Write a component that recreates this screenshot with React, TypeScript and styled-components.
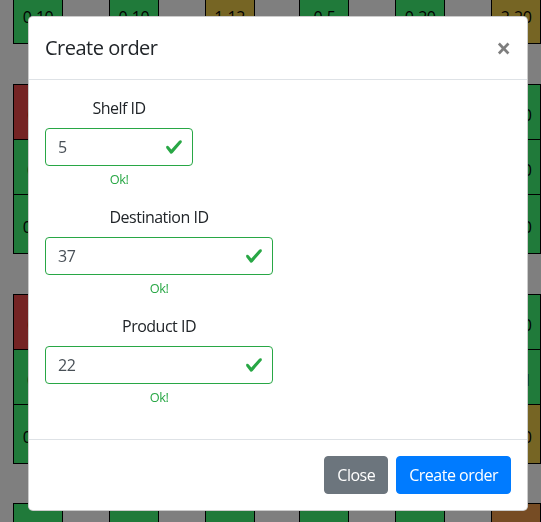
import React from "react";
import styled, { createGlobalStyle } from "styled-components";

const FONT = `"Open Sans", "Noto Sans", "DejaVu Sans", sans-serif`;

const GlobalStyle = createGlobalStyle`
  *, *::before, *::after { box-sizing: border-box; }
  html, body { margin: 0; padding: 0; background: #fff; }
  body {
    width: 541px;
    height: 522px;
    overflow: hidden;
    font-family: ${FONT};
    letter-spacing: -0.5px;
  }
`;

type Tone = "green" | "red" | "olive" | "brown" | "white";

const tones: Record<Tone, string> = {
  green: "#40f474",
  red: "#e84848",
  olive: "#ecca48",
  brown: "#ec9848",
  white: "#ffffff",
};

const Warehouse = styled.table`
  border-collapse: collapse;
  table-layout: fixed;
  margin: -17px 0 0 13px;
  font-family: ${FONT};
  font-size: 16px;
  line-height: 1.5;
  color: #000;
`;

const Row = styled.tr<{ $h: number }>`
  height: ${(p) => p.$h}px;
`;

const Cell = styled.td<{ $tone?: Tone }>`
  padding: 6px 0 0;
  text-align: center;
  vertical-align: middle;
  white-space: nowrap;
  overflow: hidden;
  border: ${(p) => (p.$tone ? "1px solid #000" : "none")};
  background: ${(p) => (p.$tone ? tones[p.$tone] : "transparent")};
`;

const Backdrop = styled.div`
  position: fixed;
  inset: 0;
  background: #000;
  opacity: 0.5;
`;

const ModalLayer = styled.div`
  position: fixed;
  inset: 0;
  overflow: hidden;
  display: flex;
  align-items: flex-start;
  padding: 16px 0 0 28px;
`;

const Dialog = styled.div`
  width: 500px;
  display: flex;
  flex-direction: column;
  background: #fff;
  border: 1px solid rgba(0, 0, 0, 0.2);
  border-radius: 4.8px;
  color: #212529;
  font-family: ${FONT};
  font-size: 16px;
  line-height: 1.5;
`;

const Header = styled.div`
  display: flex;
  align-items: flex-start;
  justify-content: space-between;
  padding: 16px;
  border-bottom: 1px solid #dee2e6;
`;

const Title = styled.h5`
  margin: 0;
  font-size: 20px;
  font-weight: 500;
  line-height: 1.5;
`;

const CloseX = styled.button`
  padding: 18px 16px 14px;
  margin: -16px -16px -16px auto;
  background: transparent;
  border: 0;
  font-family: ${FONT};
  font-size: 26px;
  font-weight: 700;
  line-height: 1;
  color: #000;
  opacity: 0.5;
  text-shadow: 0 1px 0 #fff;
  cursor: pointer;
`;

const Body = styled.div`
  padding: 16px;
`;

const FormGroup = styled.div<{ $w: number }>`
  width: ${(p) => p.$w}px;
  margin-bottom: 16px;
  text-align: center;
`;

const Label = styled.label`
  display: inline-block;
  margin-bottom: 8px;
`;

const InputWrap = styled.div`
  position: relative;
`;

const Input = styled.input`
  display: block;
  width: 100%;
  height: 38px;
  padding: 6px 36px 6px 12px;
  font-family: ${FONT};
  font-size: 16px;
  letter-spacing: -0.5px;
  line-height: 1.5;
  color: #495057;
  background: #fff;
  border: 1px solid #28a745;
  border-radius: 4px;
  outline: none;
`;

const Check = styled.svg`
  position: absolute;
  right: 10px;
  top: 50%;
  width: 18px;
  height: 18px;
  transform: translateY(-50%);
  pointer-events: none;
`;

const Feedback = styled.div`
  margin-top: 4px;
  font-size: 12.8px;
  line-height: 19px;
  color: #28a745;
`;

const Footer = styled.div`
  display: flex;
  justify-content: flex-end;
  align-items: center;
  padding: 12px;
  border-top: 1px solid #dee2e6;
`;

const Button = styled.button<{ $variant: "secondary" | "primary" }>`
  margin: 4px;
  padding: 6px 12px;
  font-family: ${FONT};
  font-size: 16px;
  letter-spacing: -0.5px;
  line-height: 1.5;
  color: #fff;
  background: ${(p) => (p.$variant === "primary" ? "#007bff" : "#6c757d")};
  border: 1px solid ${(p) => (p.$variant === "primary" ? "#007bff" : "#6c757d")};
  border-radius: 4px;
  cursor: pointer;
`;

type CellDef = { tone?: Tone; text?: string };

const colWidths = [49, 47, 49, 47, 49, 46, 49, 47, 49, 47, 49];

const empty = (): CellDef => ({});

// Shelf row: coloured shelves in even columns; only the edge columns
// show a label, the middle ones lie hidden beneath the dialog.
const shelfRow = (first: CellDef, last: CellDef, middle?: CellDef[]): CellDef[] =>
  Array.from({ length: 11 }, (_, i) => {
    if (i === 0) return first;
    if (i === 10) return last;
    if (i % 2 === 1) return empty();
    return middle ? middle[i / 2 - 1] : { tone: "green" as Tone };
  });

const aisle = (): CellDef[] => Array.from({ length: 11 }, empty);

const rows: { h: number; cells: CellDef[] }[] = [
  {
    h: 60,
    cells: shelfRow({ tone: "green", text: "0-10" }, { tone: "olive", text: "2-20" }, [
      { tone: "green", text: "0-10" },
      { tone: "olive", text: "1-12" },
      { tone: "green", text: "0-5" },
      { tone: "green", text: "0-20" },
    ]),
  },
  { h: 41, cells: aisle() },
  { h: 55, cells: shelfRow({ tone: "red", text: "0-5" }, { tone: "green", text: "0-10" }) },
  { h: 55, cells: shelfRow({ tone: "green", text: "0-5" }, { tone: "green", text: "0-10" }) },
  { h: 59, cells: shelfRow({ tone: "green", text: "0-10" }, { tone: "green", text: "0-10" }) },
  { h: 41, cells: aisle() },
  { h: 55, cells: shelfRow({ tone: "red", text: "0-5" }, { tone: "green", text: "0-10" }) },
  { h: 55, cells: shelfRow({ tone: "green", text: "0-5" }, { tone: "green", text: "0-11" }) },
  { h: 59, cells: shelfRow({ tone: "green", text: "0-10" }, { tone: "olive", text: "0-10" }) },
  { h: 40, cells: aisle() },
  {
    h: 55,
    cells: Array.from({ length: 11 }, (_, i) =>
      i === 10 ? { tone: "brown" as Tone } : i % 2 === 0 ? { tone: "green" as Tone } : { tone: "white" as Tone }
    ),
  },
];

const CheckIcon = () => (
  <Check viewBox="0 0 8 8" aria-hidden="true">
    <path
      fill="#28a745"
      d="M2.3 6.73L.6 4.53c-.4-1.04.46-1.4 1.1-.8l1.1 1.4 3.4-3.8c.6-.63 1.6-.27 1.2.7l-4 4.6c-.43.5-.8.4-1.1.1z"
    />
  </Check>
);

const fields = [
  { id: "shelf", label: "Shelf ID", value: "5", width: 148 },
  { id: "dest", label: "Destination ID", value: "37", width: 228 },
  { id: "product", label: "Product ID", value: "22", width: 228 },
];

export default function App() {
  return (
    <>
      <GlobalStyle />
      <Warehouse>
        <colgroup>
          {colWidths.map((w, i) => (
            <col key={i} style={{ width: w }} />
          ))}
        </colgroup>
        <tbody>
          {rows.map((r, ri) => (
            <Row key={ri} $h={r.h}>
              {r.cells.map((c, ci) => (
                <Cell key={ci} $tone={c.tone}>
                  {c.text}
                </Cell>
              ))}
            </Row>
          ))}
        </tbody>
      </Warehouse>
      <Backdrop />
      <ModalLayer>
        <Dialog role="dialog">
          <Header>
            <Title>Create order</Title>
            <CloseX type="button" aria-label="Close">
              ×
            </CloseX>
          </Header>
          <Body>
            {fields.map((f) => (
              <FormGroup key={f.id} $w={f.width}>
                <Label htmlFor={f.id}>{f.label}</Label>
                <InputWrap>
                  <Input id={f.id} type="text" value={f.value} readOnly />
                  <CheckIcon />
                </InputWrap>
                <Feedback>Ok!</Feedback>
              </FormGroup>
            ))}
          </Body>
          <Footer>
            <Button type="button" $variant="secondary">
              Close
            </Button>
            <Button type="button" $variant="primary">
              Create order
            </Button>
          </Footer>
        </Dialog>
      </ModalLayer>
    </>
  );
}
